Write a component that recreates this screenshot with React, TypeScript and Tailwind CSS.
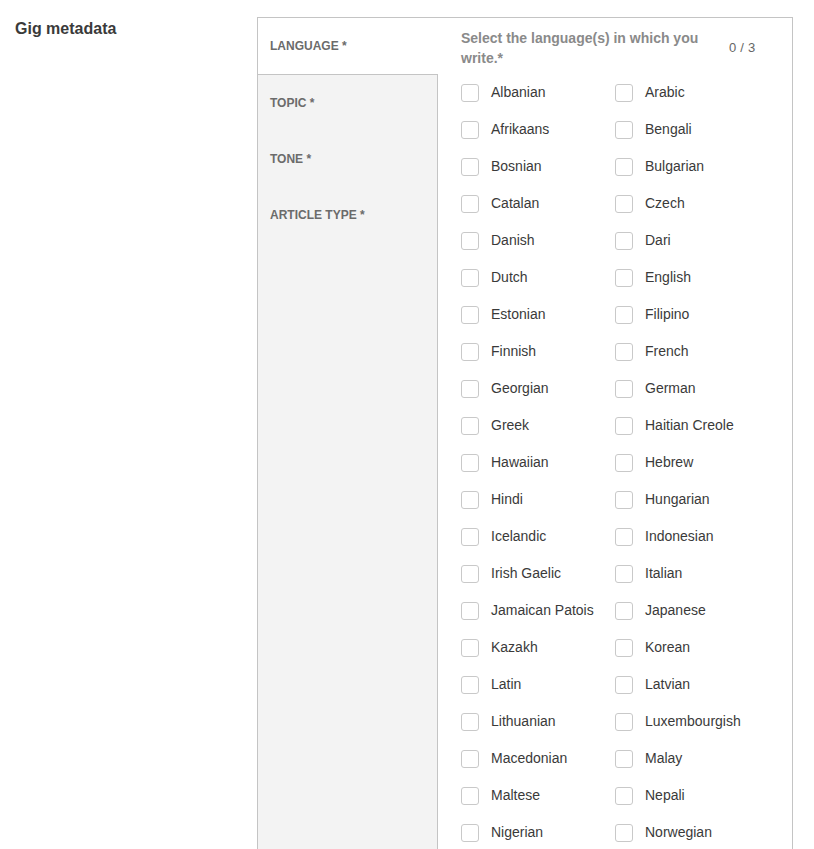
const LANGUAGES = [
  'Albanian', 'Arabic',
  'Afrikaans', 'Bengali',
  'Bosnian', 'Bulgarian',
  'Catalan', 'Czech',
  'Danish', 'Dari',
  'Dutch', 'English',
  'Estonian', 'Filipino',
  'Finnish', 'French',
  'Georgian', 'German',
  'Greek', 'Haitian Creole',
  'Hawaiian', 'Hebrew',
  'Hindi', 'Hungarian',
  'Icelandic', 'Indonesian',
  'Irish Gaelic', 'Italian',
  'Jamaican Patois', 'Japanese',
  'Kazakh', 'Korean',
  'Latin', 'Latvian',
  'Lithuanian', 'Luxembourgish',
  'Macedonian', 'Malay',
  'Maltese', 'Nepali',
  'Nigerian', 'Norwegian',
];

const TABS = ['TOPIC *', 'TONE *', 'ARTICLE TYPE *'];

export default function App() {
  return (
    <div className="flex min-h-screen bg-white pl-[15px] pt-[17px] font-['Liberation_Sans',Arial,sans-serif]">
      <h2 className="w-[242px] shrink-0 pt-[2px] text-[16px] font-bold leading-[20px] text-[#3a3a3a]">
        Gig metadata
      </h2>

      <div className="flex w-[536px] border border-b-0 border-[#c4c4c4]">
        {/* sidebar */}
        <div className="flex w-[180px] shrink-0 flex-col">
          <div className="flex h-[57px] items-center border-b border-[#c4c4c4] bg-white pl-[12px] text-[12px] font-bold text-[#6b6b6b]">
            LANGUAGE *
          </div>
          <div className="flex flex-1 flex-col border-r border-[#c4c4c4] bg-[#f3f3f3]">
            {TABS.map(t => (
              <div key={t} className="flex h-[56px] items-center pl-[12px] text-[12px] font-bold text-[#6b6b6b]">
                {t}
              </div>
            ))}
          </div>
        </div>

        {/* content */}
        <div className="flex-1 pb-[2px] pl-[23px]">
          <div className="flex items-center pt-[10px]">
            <p className="w-[268px] text-[14px] font-bold leading-[20px] text-[#8a8a8a]">
              Select the language(s) in which you write.*
            </p>
            <span className="text-[13px] tracking-[0.02em] text-[#666666]">0 / 3</span>
          </div>
          <div className="mt-[6px] grid grid-cols-[154px_154px]">
            {LANGUAGES.map(l => (
              <label key={l} className="flex h-[37px] items-center gap-[12px] text-[14px] text-[#3a3a3a]">
                <span className="h-[18px] w-[18px] shrink-0 rounded-[3px] border border-[#c9c9c9] bg-white" />
                {l}
              </label>
            ))}
          </div>
        </div>
      </div>
    </div>
  );
}
